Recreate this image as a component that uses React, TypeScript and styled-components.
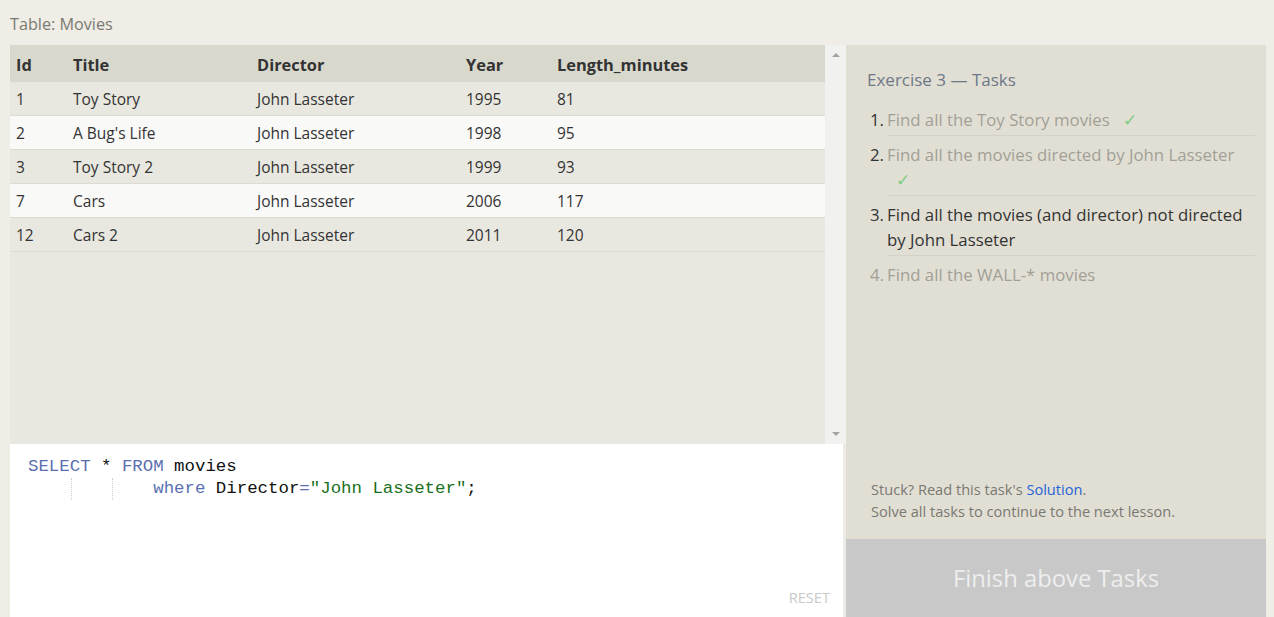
import React from 'react';
import styled, { createGlobalStyle } from 'styled-components';

const GlobalStyle = createGlobalStyle`
  html, body {
    margin: 0;
    padding: 0;
    background: #efede5;
    font-family: "Open Sans", "Noto Sans", sans-serif;
    color: #333;
  }
`;

const Page = styled.div`
  width: 1274px;
  height: 617px;
  overflow: hidden;
  padding: 0 8px 0 10px;
  box-sizing: border-box;
`;

const PageTitle = styled.div`
  height: 45px;
  line-height: 49px;
  font-size: 16.2px;
  color: #7a7a72;
`;

const Main = styled.div`
  display: grid;
  grid-template-columns: 836px 420px;
  height: 572px;
`;

const LeftPane = styled.div`
  display: flex;
  flex-direction: column;
  min-height: 0;
`;

const TableArea = styled.div`
  height: 399px;
  display: flex;
  background: #e9e8e0;
`;

const TableScroll = styled.div`
  flex: 1;
`;

const Row = styled.div<{ $variant: 'head' | 'odd' | 'even' }>`
  display: grid;
  grid-template-columns: 57px 184px 209px 91px 1fr;
  align-items: center;
  height: ${({ $variant }) => ($variant === 'head' ? '37px' : '33px')};
  padding-top: ${({ $variant }) => ($variant === 'head' ? '2px' : '0')};
  box-sizing: ${({ $variant }) => ($variant === 'head' ? 'border-box' : 'content-box')};
  background: ${({ $variant }) =>
    $variant === 'head' ? '#d9d8cc' : $variant === 'even' ? '#f9f9f8' : '#e9e8e0'};
  border-bottom: ${({ $variant }) => ($variant === 'head' ? 'none' : '1px solid #dcdbd4')};
  font-weight: ${({ $variant }) => ($variant === 'head' ? 700 : 400)};
  font-size: ${({ $variant }) => ($variant === 'head' ? '16.4px' : '15.5px')};
  color: #333;
`;

const Cell = styled.div`
  padding-left: 6px;
  white-space: nowrap;
`;

const ScrollBar = styled.div`
  width: 21px;
  background: #f1f1f0;
  display: flex;
  flex-direction: column;
  justify-content: space-between;
  align-items: center;
  padding: 8px 0 8px;
  box-sizing: border-box;
`;

const Arrow = styled.div<{ $up?: boolean }>`
  width: 0;
  height: 0;
  border-left: 4px solid transparent;
  border-right: 4px solid transparent;
  ${({ $up }) => ($up ? 'border-bottom: 4px solid #a3a3a3;' : 'border-top: 4px solid #a3a3a3;')}
`;

const Editor = styled.div`
  flex: 1;
  background: #fff;
  position: relative;
  padding: 12px 18px;
  box-sizing: border-box;
  border-right: 3px solid #ecebe8;
`;

const CodeLine = styled.div`
  font-family: "Liberation Mono", "DejaVu Sans Mono", monospace;
  font-size: 17.4px;
  line-height: 22px;
  height: 22px;
  white-space: pre;
  color: #111;
  position: relative;
`;

const Kw = styled.span`
  color: #5a6fb0;
`;

const Str = styled.span`
  color: #19701c;
`;

const IndentGuide = styled.span<{ $col: number }>`
  position: absolute;
  top: 0;
  bottom: 0;
  left: ${({ $col }) => $col * 10.4 + 1}px;
  border-left: 1px dotted #cfcfcf;
`;

const ResetButton = styled.div`
  position: absolute;
  right: 13px;
  bottom: 10px;
  font-size: 14.6px;
  color: #c9c9c9;
`;

const RightPane = styled.div`
  background: #e1dfd4;
  display: flex;
  flex-direction: column;
`;

const TasksBody = styled.div`
  flex: 1;
  padding: 22px 11px 0 21px;
  display: flex;
  flex-direction: column;
`;

const TasksTitle = styled.div`
  font-size: 17px;
  line-height: 25px;
  color: #6e7888;
  margin-bottom: 9px;
`;

const TaskList = styled.ol`
  margin: 0;
  padding: 0 0 0 20px;
  list-style: none;
`;

const TaskItem = styled.li<{ $state: 'done' | 'current' | 'todo'; $last?: boolean }>`
  position: relative;
  font-size: 16.8px;
  line-height: 25px;
  padding: 6px 0 3px 0;
  color: ${({ $state }) => ($state === 'current' ? '#333' : '#a19f97')};
  border-bottom: ${({ $last }) => ($last ? 'none' : '1px solid #d4d2c7')};
`;

const TaskNum = styled.span<{ $dark?: boolean }>`
  position: absolute;
  left: -17px;
  color: ${({ $dark }) => ($dark ? '#333' : '#a19f97')};
`;

const Check = styled.span`
  color: #7fcb84;
  margin-left: 9px;
`;

const Notes = styled.div`
  margin-top: auto;
  padding-bottom: 17px;
  font-size: 14.6px;
  line-height: 22px;
  color: #7a7872;
  padding-left: 4px;
`;

const SolutionLink = styled.a`
  color: #2563d9;
  text-decoration: none;
`;

const FinishButton = styled.div`
  height: 78px;
  background: #c8c8c8;
  display: flex;
  align-items: center;
  justify-content: center;
  font-size: 23.8px;
  color: #eeeeee;
`;

const movies = [
  { id: 1, title: 'Toy Story', director: 'John Lasseter', year: 1995, length: 81 },
  { id: 2, title: "A Bug's Life", director: 'John Lasseter', year: 1998, length: 95 },
  { id: 3, title: 'Toy Story 2', director: 'John Lasseter', year: 1999, length: 93 },
  { id: 7, title: 'Cars', director: 'John Lasseter', year: 2006, length: 117 },
  { id: 12, title: 'Cars 2', director: 'John Lasseter', year: 2011, length: 120 },
];

const App: React.FC = () => {
  return (
    <>
      <GlobalStyle />
      <Page>
        <PageTitle>Table: Movies</PageTitle>
        <Main>
          <LeftPane>
            <TableArea>
              <TableScroll>
                <Row $variant="head">
                  <Cell>Id</Cell>
                  <Cell>Title</Cell>
                  <Cell>Director</Cell>
                  <Cell>Year</Cell>
                  <Cell>Length_minutes</Cell>
                </Row>
                {movies.map((m, i) => (
                  <Row key={m.id} $variant={i % 2 === 0 ? 'odd' : 'even'}>
                    <Cell>{m.id}</Cell>
                    <Cell>{m.title}</Cell>
                    <Cell>{m.director}</Cell>
                    <Cell>{m.year}</Cell>
                    <Cell>{m.length}</Cell>
                  </Row>
                ))}
              </TableScroll>
              <ScrollBar>
                <Arrow $up />
                <Arrow />
              </ScrollBar>
            </TableArea>
            <Editor>
              <CodeLine>
                <Kw>SELECT</Kw> * <Kw>FROM</Kw> movies
              </CodeLine>
              <CodeLine>
                <IndentGuide $col={4} />
                <IndentGuide $col={8} />
                {'            '}
                <Kw>where</Kw> Director<Kw>=</Kw>
                <Str>"John Lasseter"</Str>;
              </CodeLine>
              <ResetButton>RESET</ResetButton>
            </Editor>
          </LeftPane>
          <RightPane>
            <TasksBody>
              <TasksTitle>Exercise 3 — Tasks</TasksTitle>
              <TaskList>
                <TaskItem $state="done">
                  <TaskNum $dark>1.</TaskNum>
                  Find all the Toy Story movies <Check>✓</Check>
                </TaskItem>
                <TaskItem $state="done">
                  <TaskNum $dark>2.</TaskNum>
                  Find all the movies directed by John Lasseter <Check>✓</Check>
                </TaskItem>
                <TaskItem $state="current">
                  <TaskNum $dark>3.</TaskNum>
                  Find all the movies (and director) not directed by John Lasseter
                </TaskItem>
                <TaskItem $state="todo" $last>
                  <TaskNum>4.</TaskNum>
                  Find all the WALL-* movies
                </TaskItem>
              </TaskList>
              <Notes>
                Stuck? Read this task's <SolutionLink href="#">Solution</SolutionLink>.
                <br />
                Solve all tasks to continue to the next lesson.
              </Notes>
            </TasksBody>
            <FinishButton>Finish above Tasks</FinishButton>
          </RightPane>
        </Main>
      </Page>
    </>
  );
};

export default App;
